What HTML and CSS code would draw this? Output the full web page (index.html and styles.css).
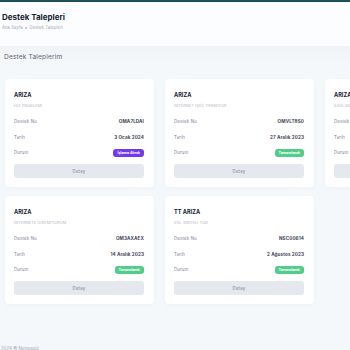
FILE: index.html
```html
<!DOCTYPE html>
<html lang="tr">
<head>
    <meta charset="UTF-8">
    <meta name="viewport" content="width=device-width, initial-scale=1.0">
    <title>Destek Talepleri</title>
    <link rel="stylesheet" href="styles.css">
</head>
<body>
    <div class="topbar"></div>
    <div class="page-header">
        <h1>Destek Talepleri</h1>
        <div class="breadcrumb">Ana Sayfa <span class="dot"></span> Destek Talepleri</div>
    </div>

    <div class="section-title">Destek Taleplerim</div>

    <div class="ticket-grid">
        <div class="card">
            <div class="card-title">ARIZA</div>
            <div class="card-sub">HIZ PROBLEMI</div>
            <div class="info-row"><span class="label">Destek No</span><span class="value">OMA7LDAI</span></div>
            <div class="info-row"><span class="label">Tarih</span><span class="value">3 Ocak 2024</span></div>
            <div class="info-row"><span class="label">Durum</span><span class="badge badge-purple">İşleme Alındı</span></div>
            <button type="button" class="detail-btn">Detay</button>
        </div>
        <div class="card">
            <div class="card-title">ARIZA</div>
            <div class="card-sub">İNTERNET IŞIĞI YANMIYOR</div>
            <div class="info-row"><span class="label">Destek No</span><span class="value">OMVLT8S0</span></div>
            <div class="info-row"><span class="label">Tarih</span><span class="value">27 Aralık 2023</span></div>
            <div class="info-row"><span class="label">Durum</span><span class="badge badge-green">Tamamlandı</span></div>
            <button type="button" class="detail-btn">Detay</button>
        </div>
        <div class="card">
            <div class="card-title">ARIZA</div>
            <div class="card-sub">BAĞLANTI KOPUYOR</div>
            <div class="info-row"><span class="label">Destek No</span><span class="value">OMKT2P1D</span></div>
            <div class="info-row"><span class="label">Tarih</span><span class="value">11 Aralık 2023</span></div>
            <div class="info-row"><span class="label">Durum</span><span class="badge badge-green">Tamamlandı</span></div>
            <button type="button" class="detail-btn">Detay</button>
        </div>
        <div class="card">
            <div class="card-title">ARIZA</div>
            <div class="card-sub">INTERNETE GIREMIYORUM</div>
            <div class="info-row"><span class="label">Destek No</span><span class="value">OM3AXAEX</span></div>
            <div class="info-row"><span class="label">Tarih</span><span class="value">14 Aralık 2023</span></div>
            <div class="info-row"><span class="label">Durum</span><span class="badge badge-green">Tamamlandı</span></div>
            <button type="button" class="detail-btn">Detay</button>
        </div>
        <div class="card">
            <div class="card-title">TT ARIZA</div>
            <div class="card-sub">DSL SINYALI YOK</div>
            <div class="info-row"><span class="label">Destek No</span><span class="value">NSC00614</span></div>
            <div class="info-row"><span class="label">Tarih</span><span class="value">2 Ağustos 2023</span></div>
            <div class="info-row"><span class="label">Durum</span><span class="badge badge-green">Tamamlandı</span></div>
            <button type="button" class="detail-btn">Detay</button>
        </div>
    </div>

    <div class="footer">2024 © Netspeed</div>
</body>
</html>
```

FILE: styles.css
```css
body {
    margin: 0;
    font-family: Inter, "Noto Sans", sans-serif;
    background-color: #f5f8fa;
    overflow: hidden;
}

.topbar {
    height: 2px;
    background-color: #1e4f57;
}

.page-header {
    background-color: #fcfdfe;
    padding: 11px 2px 0;
    height: 33px;
}

h1 {
    margin: 0;
    font-size: 8px;
    line-height: 9px;
    font-weight: 700;
    color: #181c32;
}

.breadcrumb {
    margin-top: 3px;
    font-size: 4.2px;
    line-height: 5px;
    letter-spacing: 0.1px;
    color: #a1a5b7;
}

.breadcrumb .dot {
    display: inline-block;
    width: 2px;
    height: 2px;
    border-radius: 50%;
    background-color: #b5b5c3;
    vertical-align: middle;
    margin: 0 1px;
}

.section-title {
    padding: 6px 4px 0;
    height: 33px;
    box-sizing: border-box;
    font-size: 6.6px;
    line-height: 10px;
    letter-spacing: 0.15px;
    color: #5e6278;
    background: linear-gradient(#f1f4f7, #f5f8fa 60%);
}

.ticket-grid {
    display: grid;
    grid-template-columns: repeat(3, 149px);
    gap: 9px 11px;
    padding-left: 5px;
    width: 600px;
}

.card {
    background-color: #fff;
    border-radius: 4px;
    padding: 12px 10px 9px 9px;
    box-shadow: 0 1px 4px rgba(0, 0, 0, 0.03);
}

.card-title {
    font-size: 5.6px;
    line-height: 8px;
    font-weight: 700;
    color: #181c32;
}

.card-sub {
    margin-top: 4px;
    font-size: 3.8px;
    line-height: 6px;
    letter-spacing: 0.15px;
    color: #b5b5c3;
    margin-bottom: 5px;
}

.info-row {
    display: flex;
    justify-content: space-between;
    align-items: center;
    height: 15.5px;
}

.label {
    font-size: 4.4px;
    letter-spacing: 0.15px;
    color: #7e8299;
}

.value {
    font-size: 4.6px;
    font-weight: 700;
    letter-spacing: 0.1px;
    color: #3f4254;
}

.badge {
    font-size: 3.6px;
    font-weight: 700;
    color: #fff;
    line-height: 8px;
    padding: 0 4px;
    border-radius: 3px;
}

.badge-purple {
    background-color: #7239ea;
}

.badge-green {
    background-color: #50cd89;
}

.detail-btn {
    display: block;
    width: 100%;
    height: 14px;
    margin-top: 3.5px;
    border: none;
    border-radius: 3px;
    background-color: #e6e8f0;
    color: #7e8299;
    font-family: inherit;
    font-size: 4.4px;
    letter-spacing: 0.15px;
    padding: 0;
}

.footer {
    margin-top: 42px;
    padding-left: 1px;
    font-size: 4.4px;
    color: #a1a5b7;
}
```
